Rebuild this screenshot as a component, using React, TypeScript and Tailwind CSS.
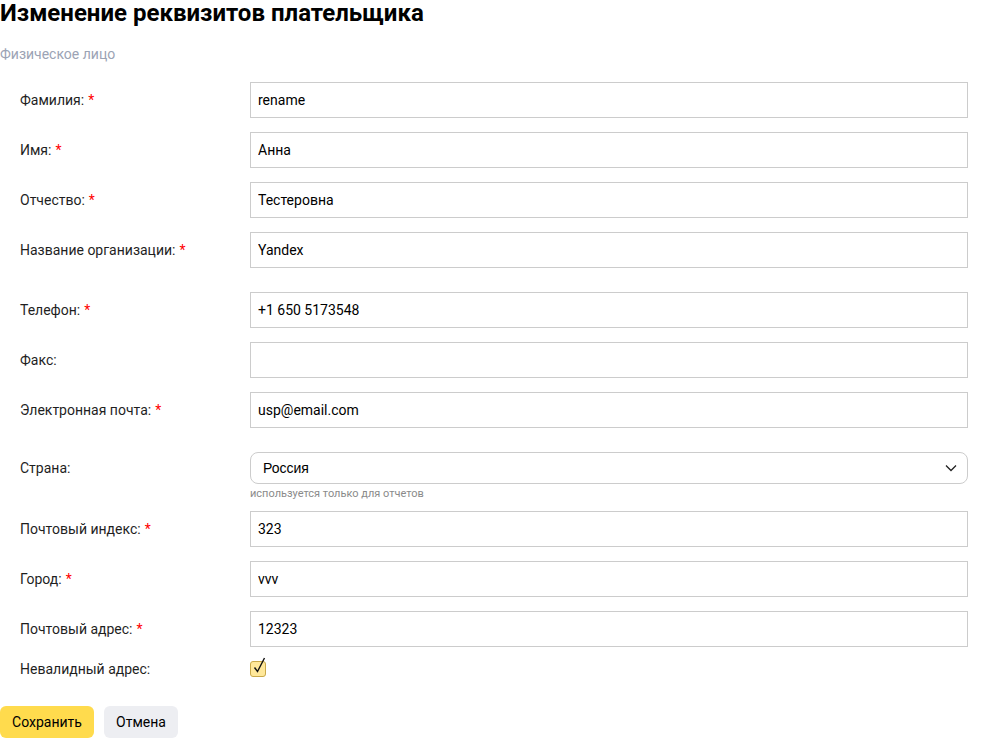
import React from 'react';

type Field = {
  label: string;
  value: string;
  required?: boolean;
};

const personFields: Field[] = [
  { label: 'Фамилия:', value: 'rename', required: true },
  { label: 'Имя:', value: 'Анна', required: true },
  { label: 'Отчество:', value: 'Тестеровна', required: true },
  { label: 'Название организации:', value: 'Yandex', required: true },
];

const contactFields: Field[] = [
  { label: 'Телефон:', value: '+1 650 5173548', required: true },
  { label: 'Факс:', value: '' },
  { label: 'Электронная почта:', value: 'usp@email.com', required: true },
];

const addressFields: Field[] = [
  { label: 'Почтовый индекс:', value: '323', required: true },
  { label: 'Город:', value: 'vvv', required: true },
  { label: 'Почтовый адрес:', value: '12323', required: true },
];

function Label({ text, required }: { text: string; required?: boolean }) {
  return (
    <div className="w-[250px] shrink-0 pl-5 text-[14px] text-[#1f1f1f]">
      {text}
      {required && <span className="ml-1 text-[#ff0000]">*</span>}
    </div>
  );
}

function TextRow({ field }: { field: Field }) {
  return (
    <div className="flex items-center">
      <Label text={field.label} required={field.required} />
      <input
        defaultValue={field.value}
        className="h-9 w-[718px] border border-[#cccccc] bg-white px-[7px] text-[14px] text-black outline-none [font-family:Roboto,sans-serif]"
      />
    </div>
  );
}

export default function App() {
  return (
    <div className="min-h-[739px] bg-white [font-family:Roboto,'Liberation_Sans',sans-serif]">
      <h1 className="text-[24px] font-bold leading-[26px] text-black">
        Изменение реквизитов плательщика
      </h1>
      <p className="mt-[18px] text-[14px] text-[#9ba3b4]">Физическое лицо</p>

      <div className="mt-[17px] flex flex-col gap-[14px]">
        {personFields.map((f) => (
          <TextRow key={f.label} field={f} />
        ))}
      </div>

      <div className="mt-6 flex flex-col gap-[14px]">
        {contactFields.map((f) => (
          <TextRow key={f.label} field={f} />
        ))}
      </div>

      <div className="mt-6 flex">
        <div className="flex h-8 items-center">
          <Label text="Страна:" />
        </div>
        <div className="flex flex-col">
          <div className="flex h-8 w-[718px] items-center justify-between rounded-[8px] border border-[#cccccc] pl-3 pr-[10px] text-[14px] text-black [font-family:'Liberation_Sans',sans-serif]">
            <span>Россия</span>
            <svg width="12" height="8" viewBox="0 0 12 8" fill="none">
              <path d="M1 1.5L6 6.5L11 1.5" stroke="#222" strokeWidth="1.3" />
            </svg>
          </div>
          <span className="mt-[3px] text-[11px] leading-[14px] text-[#8a8a8a]">
            используется только для отчетов
          </span>
        </div>
      </div>

      <div className="mt-[10px] flex flex-col gap-[14px]">
        {addressFields.map((f) => (
          <TextRow key={f.label} field={f} />
        ))}
      </div>

      <div className="mt-[12px] flex h-5 items-center">
        <Label text="Невалидный адрес:" />
        <span className="relative h-4 w-4 rounded-[3px] border border-[#c9a94a] bg-[#ffe89a]">
          <svg
            className="absolute left-[1px] top-[-5px]"
            width="15"
            height="18"
            viewBox="0 0 15 18"
            fill="none"
          >
            <path d="M2.5 10.5L5.5 14.5L12.5 1" stroke="#111" strokeWidth="1.4" />
          </svg>
        </span>
      </div>

      <div className="mt-[27px] flex gap-[10px]">
        <button className="h-8 w-[94px] rounded-[6px] bg-[#ffdb4d] text-[14px] text-black">
          Сохранить
        </button>
        <button className="h-8 w-[74px] rounded-[6px] bg-[#edeef2] text-[14px] text-black">
          Отмена
        </button>
      </div>
    </div>
  );
}
